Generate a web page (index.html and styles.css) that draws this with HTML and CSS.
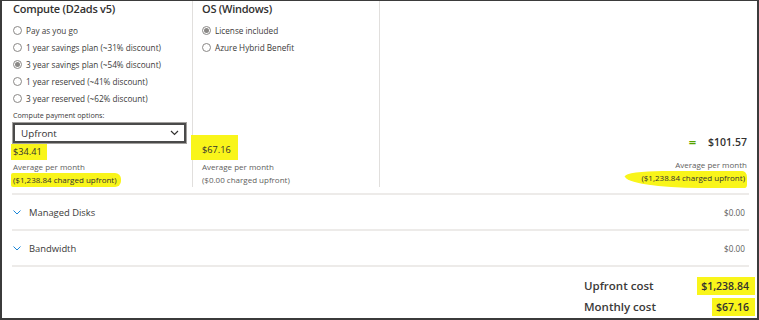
FILE: index.html
```html
<!DOCTYPE html>
<html lang="en">
<head>
    <meta charset="UTF-8">
    <meta name="viewport" content="width=device-width, initial-scale=1.0">
    <title>Pricing estimate</title>
    <link rel="stylesheet" href="styles.css">
</head>
<body>
    <div class="frame">
        <div class="top">
            <!-- Compute column -->
            <section class="col col-compute">
                <h3 class="col-title">Compute (D2ads v5)</h3>
                <ul class="options">
                    <li><span class="radio"></span>Pay as you go</li>
                    <li><span class="radio"></span>1 year savings plan (~31% discount)</li>
                    <li><span class="radio checked"></span>3 year savings plan (~54% discount)</li>
                    <li><span class="radio"></span>1 year reserved (~41% discount)</li>
                    <li><span class="radio"></span>3 year reserved (~62% discount)</li>
                </ul>
                <div class="field-label">Compute payment options:</div>
                <div class="select">
                    <span>Upfront</span>
                    <svg width="9" height="6" viewBox="0 0 9 6"><path d="M1 1l3.5 3.5L8 1" fill="none" stroke="#323130" stroke-width="1.2"/></svg>
                </div>
                <div class="price"><span class="hl hl-price1">$34.41</span></div>
                <div class="sub">Average per month</div>
                <div class="sub"><span class="hl hl-charged1">($1,238.84 charged upfront)</span></div>
            </section>

            <!-- OS column -->
            <section class="col col-os">
                <h3 class="col-title">OS (Windows)</h3>
                <ul class="options">
                    <li><span class="radio checked"></span>License included</li>
                    <li><span class="radio"></span>Azure Hybrid Benefit</li>
                </ul>
                <div class="spacer"></div>
                <div class="price"><span class="hl hl-price2">$67.16</span></div>
                <div class="sub">Average per month</div>
                <div class="sub">($0.00 charged upfront)</div>
            </section>

            <!-- Total column -->
            <section class="col col-total">
                <div class="total-line"><span class="equals">=</span><span class="total-value">$101.57</span></div>
                <div class="sub">Average per month</div>
                <div class="sub"><span class="hl hl-charged3">($1,238.84 charged upfront)</span></div>
            </section>
        </div>

        <div class="row">
            <svg class="chev" width="8" height="5" viewBox="0 0 8 5"><path d="M0.5 0.5l3.5 3.5 3.5-3.5" fill="none" stroke="#0078d4" stroke-width="0.9"/></svg>
            <span class="row-name">Managed Disks</span>
            <span class="row-value">$0.00</span>
        </div>
        <div class="row">
            <svg class="chev" width="8" height="5" viewBox="0 0 8 5"><path d="M0.5 0.5l3.5 3.5 3.5-3.5" fill="none" stroke="#0078d4" stroke-width="0.9"/></svg>
            <span class="row-name">Bandwidth</span>
            <span class="row-value">$0.00</span>
        </div>

        <div class="totals">
            <div class="totals-line"><span class="totals-name">Upfront cost</span><span class="hl hl-upfront">$1,238.84</span></div>
            <div class="totals-line"><span class="totals-name">Monthly cost</span><span class="hl hl-monthly">$67.16</span></div>
        </div>
    </div>
</body>
</html>
```

FILE: styles.css
```css
/* pricing calculator snapshot */
* {
    box-sizing: border-box;
}
body {
    margin: 0;
    font-family: "Open Sans", "Noto Sans", Arial, sans-serif;
    color: #323130;
    background-color: #fff;
}
.frame {
    width: 759px;
    height: 320px;
    border: 2px solid #3b3b3b;
    border-top-width: 1px;
    overflow: hidden;
    padding: 0 8px 0 10px;
}
.top {
    display: flex;
    height: 186px;
    margin-bottom: 6px;
}
.col {
    display: flex;
    flex-direction: column;
    padding-bottom: 1px;
}
.col-compute {
    width: 181px;
    padding-left: 1px;
    border-right: 1px solid #e1dfdd;
}
.col-os {
    width: 187px;
    padding-left: 9px;
    border-right: 1px solid #e1dfdd;
}
.col-total {
    flex: 1;
    align-items: flex-end;
    justify-content: flex-end;
    padding-right: 2px;
    padding-bottom: 3px;
}
.col-title {
    margin: 0;
    font-size: 11px;
    font-weight: 600;
    line-height: 15px;
    letter-spacing: -0.25px;
}
.options {
    list-style: none;
    margin: 6px 0 0;
    padding: 0;
}
.options li {
    display: flex;
    align-items: center;
    height: 17px;
    font-size: 8.2px;
    color: #3b3a39;
}
.radio {
    width: 9px;
    height: 9px;
    margin-right: 4px;
    border: 1px solid #8a8886;
    border-radius: 50%;
    display: inline-flex;
    align-items: center;
    justify-content: center;
}
.radio.checked::after {
    content: "";
    width: 5px;
    height: 5px;
    border-radius: 50%;
    background-color: #8a8886;
}
.field-label {
    margin-top: 3px;
    font-size: 7.2px;
    color: #3b3a39;
    line-height: 10px;
}
.select {
    display: flex;
    align-items: center;
    justify-content: space-between;
    width: 173px;
    height: 24px;
    margin: 3px 0 1px 0;
    padding: 0 5px 0 6px;
    border: 2px solid #4a4a4a;
    outline: 1px solid #a19f9d;
    font-size: 9.8px;
    color: #323130;
}
.price {
    font-size: 9.2px;
    line-height: 14px;
}
.sub {
    font-size: 8px;
    line-height: 13px;
    color: #605e5c;
}
.spacer {
    flex: 1;
}
.hl {
    background-color: #f9f51a;
    color: #323130;
}
.hl-price1 {
    display: inline-block;
    margin-left: -2px;
    padding: 1px 5px 1px 2px;
}
.hl-charged1 {
    margin-left: -2px;
    padding: 1px 4px 2px 2px;
    border-radius: 2px 6px 6px 2px;
}
.hl-price2 {
    display: inline-block;
    margin-left: -11px;
    padding: 0 7px 3px 11px;
    margin-top: -8px;
    padding-top: 8px;
}
.hl-charged3 {
    padding: 1px 2px 5px 16px;
    border-radius: 40% 6px 4px 80% / 40% 8px 4px 90%;
}
.total-line {
    display: flex;
    align-items: center;
    margin-bottom: 7px;
}
.equals {
    color: #57a300;
    font-weight: 700;
    font-size: 13px;
    margin-right: 12px;
}
.total-value {
    font-size: 10.5px;
    font-weight: 600;
}
.row {
    display: flex;
    align-items: center;
    height: 36px;
    padding: 0 4px 0 1px;
    border-top: 2px solid #edebe9;
    font-size: 9.4px;
}
.row-name {
    flex: 1;
    color: #3b3a39;
    margin-left: 8px;
}
.row-value {
    font-size: 8.2px;
    color: #605e5c;
}
.chev {
    display: block;
}
.totals {
    border-top: 2px solid #edebe9;
    padding: 8px 0 0 572px;
}
.totals-line {
    display: flex;
    align-items: center;
    justify-content: space-between;
    height: 21px;
}
.totals-name {
    font-size: 11.5px;
    font-weight: 600;
    color: #3b3a39;
}
.totals-line .hl {
    font-size: 10.5px;
    font-weight: 600;
}
.hl-upfront {
    padding: 2px 6px 2px 4px;
    margin-right: -6px;
}
.hl-monthly {
    padding: 2px 6px 2px 4px;
    margin-right: -6px;
}
```
